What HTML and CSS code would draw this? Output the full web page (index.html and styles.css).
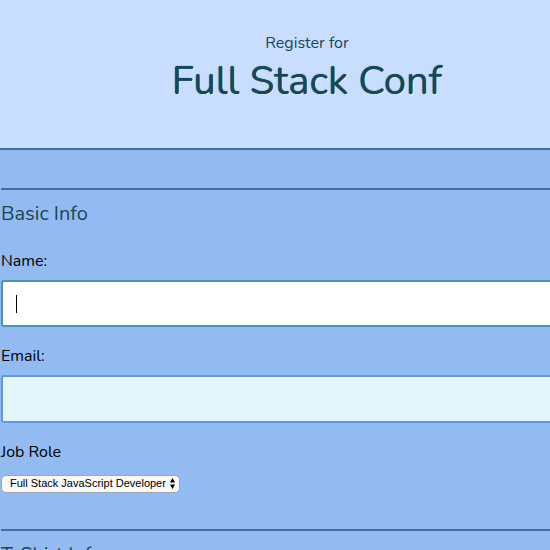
FILE: index.html
```html
<!DOCTYPE html>
<html lang="en">
<head>
<meta charset="utf-8">
<meta name="viewport" content="width=device-width, initial-scale=1">
<title>Register for Full Stack Conf</title>
<link rel="stylesheet" href="styles.css">
</head>
<body>
<header class="banner">
  <p class="banner-lead">Register for</p>
  <h1 class="banner-title">Full Stack Conf</h1>
</header>
<form class="form">
  <section class="group">
    <h2 class="group-title">Basic Info</h2>
    <label class="label" for="name">Name:</label>
    <div class="field">
      <input class="input input-active" type="text" id="name">
      <span class="caret"></span>
    </div>
    <label class="label" for="email">Email:</label>
    <div class="field">
      <input class="input" type="email" id="email">
    </div>
    <label class="label" for="role">Job Role</label>
    <div class="select-wrap">
      <select class="select" id="role">
        <option>Full Stack JavaScript Developer</option>
      </select>
      <svg class="arrows" viewBox="0 0 5 11" aria-hidden="true"><path d="M2.5 0 5 4.5H0zM0 6.5h5L2.5 11z"/></svg>
    </div>
  </section>
  <section class="group">
    <h2 class="group-title">T-Shirt Info</h2>
  </section>
</form>
</body>
</html>
```
FILE: styles.css
```css
* {
  box-sizing: border-box;
}

html,
body {
  height: 100%;
}

body {
  margin: 0;
  overflow: hidden;
  background: #94baf2;
  color: #000;
  font: 16px/24px Nunito, Lato, sans-serif;
}

.banner {
  padding: 31px 0 41px 64px;
  border-bottom: 2px solid #3a7199;
  background: #c9deff;
  color: #184759;
  text-align: center;
}

.banner-lead {
  margin: 0;
}

.banner-title {
  margin: 0;
  font-size: 40px;
  font-weight: 400;
  line-height: 52px;
  text-shadow: 0 0 1px #184759, 1px 1px 0 #e4f6fb;
}

.form {
  margin: 38px -64px 0 1px;
}

.group {
  margin-bottom: 36px;
  border-top: 2px solid #3a7199;
}

.group-title {
  margin: 9px 0 20px;
  color: #184759;
  font-size: 20px;
  font-weight: 400;
  line-height: 30px;
}

.label {
  display: block;
  margin-bottom: 7px;
}

.field {
  position: relative;
  margin-bottom: 17px;
}

.input {
  display: block;
  width: 100%;
  height: 48px;
  padding: 0 13px;
  border: 2px solid #6498e4;
  border-radius: 3px;
  outline: 0;
  background: #e4f6fb;
  font: inherit;
}

.input-active {
  height: 47px;
  border-color: #4996b3;
  background: #fff;
}

.caret {
  position: absolute;
  top: 15px;
  left: 15px;
  width: 1px;
  height: 18px;
  background: #000;
}

.select-wrap {
  position: relative;
  width: 179px;
  margin-top: 11px;
}

.select {
  display: block;
  width: 100%;
  height: 18px;
  padding: 0 8px 1px;
  appearance: none;
  border: 1px solid #a6a6a6;
  border-radius: 5px;
  background: #f8f8f8;
  color: #000;
  font: 11px/15px "Liberation Sans", Arial, sans-serif;
}

.arrows {
  position: absolute;
  top: 3px;
  right: 5px;
  width: 5px;
  height: 11px;
  pointer-events: none;
}
```
